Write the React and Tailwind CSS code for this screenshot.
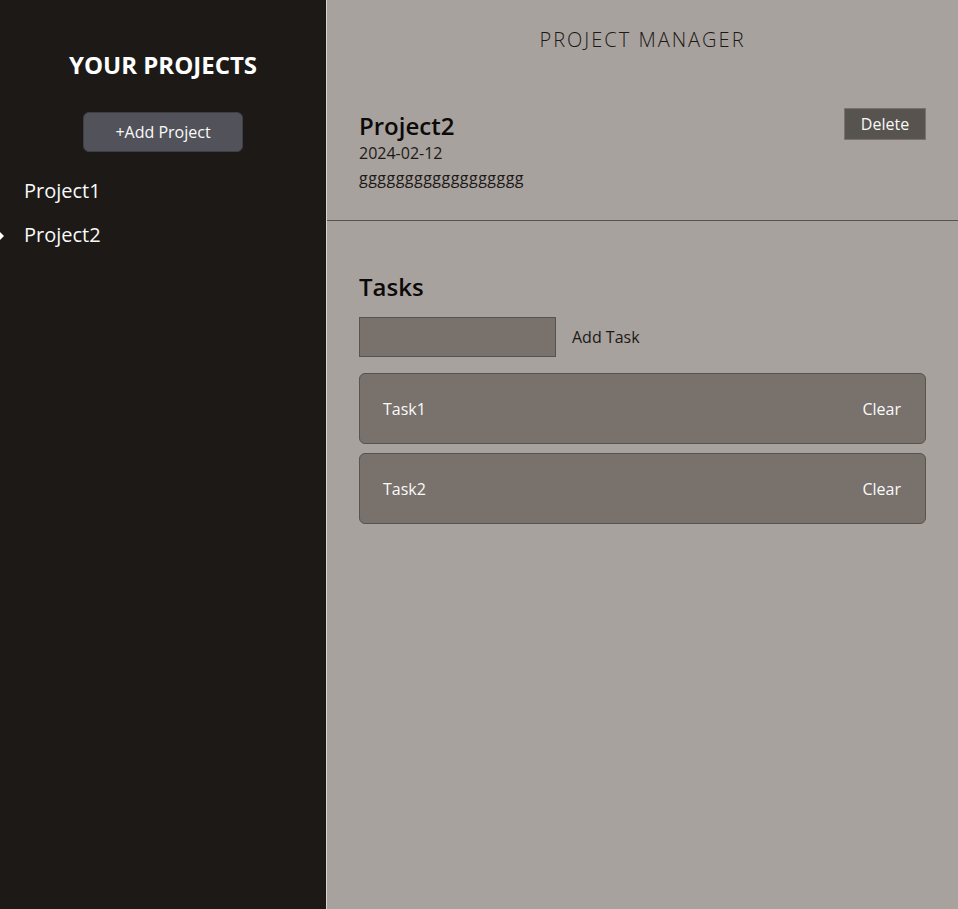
import { useState } from 'react'

const font = { fontFamily: '"Open Sans", "Noto Sans", sans-serif' }

const PROJECTS = [
  { id: 1, title: 'Project1' },
  { id: 2, title: 'Project2', date: '2024-02-12', desc: 'gggggggggggggggggg' },
]

const TASKS = ['Task1', 'Task2']

function Sidebar({ selected }) {
  return (
    <aside className="w-[327px] shrink-0 bg-[#1c1917] border-r border-[#d6d3d1] min-h-screen">
      <h2 className="pt-[49px] text-center text-[24px] leading-[32px] font-bold text-white">YOUR PROJECTS</h2>
      <div className="flex justify-center mt-[31px]">
        <button className="w-[160px] h-[40px] rounded-md bg-[#52525b] border border-[#3f3f46] text-[16px] text-stone-50">+Add Project</button>
      </div>
      <ul className="mt-[17px]">
        {PROJECTS.map(p => (
          <li key={p.id} className="relative px-6 h-[44px] flex items-center text-[20px] text-stone-50">
            {p.id === selected && (
              <span className="absolute left-0 top-[19px] w-0 h-0 border-y-[4px] border-y-transparent border-l-[4px] border-l-white" />
            )}
            {p.title}
          </li>
        ))}
      </ul>
    </aside>
  )
}

export default function App() {
  const [selected] = useState(2)
  const project = PROJECTS.find(p => p.id === selected)

  return (
    <div className="flex min-h-screen" style={font}>
      <Sidebar selected={selected} />
      <main className="flex-1 bg-[#a8a29e]">
        <h1 className="pt-[26px] text-center text-[20px] leading-[28px] tracking-[0.1em] font-light text-[#1c1917]">PROJECT MANAGER</h1>

        <section className="px-8 pt-[57px] pb-[29px] border-b border-[#57534e] flex justify-between items-start">
          <div>
            <h2 className="text-[24px] leading-[30px] font-semibold text-[#0c0a09]">{project.title}</h2>
            <p className="text-[16px] leading-[24px] text-[#1c1917]">{project.date}</p>
            <p className="text-[16px] leading-[26px] tracking-[0.03em] text-[#1c1917]">{project.desc}</p>
          </div>
          <button className="mt-[-3px] w-[82px] h-[32px] bg-[#57534e] border border-[#78716c] text-[16px] text-stone-50">Delete</button>
        </section>

        <section className="px-8 pt-[50px]">
          <h2 className="text-[24px] leading-[32px] font-semibold text-[#0c0a09]">Tasks</h2>
          <div className="flex items-center gap-4 mt-[14px]">
            <input className="w-[197px] h-[40px] bg-[#78716c] border border-[#57534e] outline-none px-2" />
            <button className="text-[16px] text-[#1c1917]">Add Task</button>
          </div>
          <ul className="mt-[16px] flex flex-col gap-[9px]">
            {TASKS.map(t => (
              <li key={t} className="h-[71px] pl-[23px] pr-6 flex items-center justify-between rounded-md bg-[#78716c] border border-[#57534e] text-[16px] text-stone-50">
                <span>{t}</span>
                <button>Clear</button>
              </li>
            ))}
          </ul>
        </section>
      </main>
    </div>
  )
}
